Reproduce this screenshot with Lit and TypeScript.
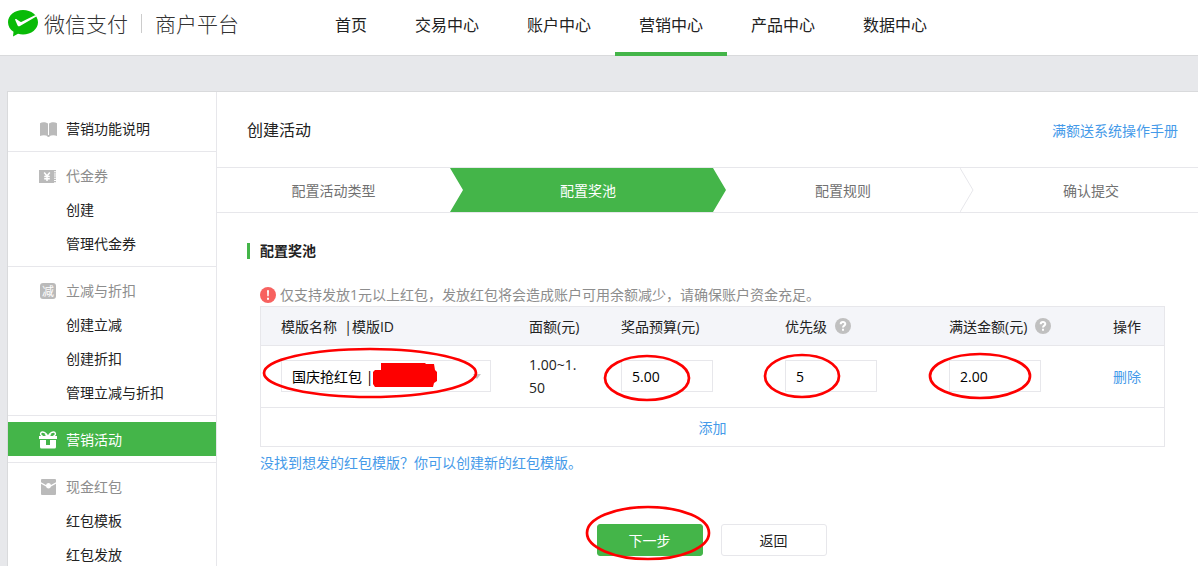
import { LitElement, html, css, svg, nothing, TemplateResult } from "lit";
import { customElement, property, state } from "lit/decorators.js";
import { classMap } from "lit/directives/class-map.js";

interface MenuGroup {
  icon: string;
  title: string;
  plain?: boolean;
  active?: boolean;
  items: string[];
}

const NAV = ["首页", "交易中心", "账户中心", "营销中心", "产品中心", "数据中心"];

const MENU: MenuGroup[] = [
  { icon: "book", title: "营销功能说明", plain: true, items: [] },
  { icon: "coupon", title: "代金券", items: ["创建", "管理代金券"] },
  { icon: "discount", title: "立减与折扣", items: ["创建立减", "创建折扣", "管理立减与折扣"] },
  { icon: "gift", title: "营销活动", active: true, items: [] },
  { icon: "packet", title: "现金红包", items: ["红包模板", "红包发放"] },
];

const STEPS = ["配置活动类型", "配置奖池", "配置规则", "确认提交"];

const ICONS: Record<string, TemplateResult> = {
  book: svg`<path fill="#bababa" d="M1 3.200C3 1.800 6.500 1.800 9 3.500v12.700c-2.500-1.200-5.500-1.200-8-.2zM10 3.500c2.500-1.700 6-1.700 8-.3V16c-2-1-5.500-1-8 .2z"/><path fill="#bababa" d="M8.500 15h2v2h-2z"/>`,
  coupon: svg`<path fill="#bababa" d="M0 3h15v13H0z"/><path stroke="#bababa" stroke-width="2" stroke-dasharray="1.200 1" d="M16 3v13"/><path fill="none" stroke="#fff" stroke-width="1.500" d="M5.200 5.500 8 9l2.800-3.500M8 8.800V14M5.200 9.500h5.600M5.200 11.800h5.600"/>`,
  gift: svg`<g fill="none" stroke="#fff" stroke-width="1.400"><path d="M8.800 5.200C7.500 2 4 .2 2.200 1.400.8 2.800 2 5 4 5.500M9.200 5.200C10.500 2 14 .2 15.800 1.400c1.400 1.400.2 3.600-1.800 4.100M8.500 5 6 3.500M9.500 5 12 3.500"/></g><path fill="#fff" d="M0 5h18v3H0zM1 9h6v5h4V9h6v7a1.500 1.500 0 0 1-1.500 1.500h-13A1.500 1.500 0 0 1 1 16z"/>`,
  packet: svg`<path fill="#bababa" d="M3 1h13a1 1 0 0 1 1 1v2.200L12 7a2.600 2.600 0 0 0-5 0L2 4.200V2a1 1 0 0 1 1-1zM2 5.800l5 2.700a2.600 2.600 0 0 0 5 0l5-2.700V16a1 1 0 0 1-1 1H3a1 1 0 0 1-1-1z"/>`,
};

@customElement("side-icon")
export class SideIcon extends LitElement {
  @property() name = "";

  static styles = css`
    :host { display: block; width: 18px; height: 18px; }
    svg { display: block; }
    .char {
      width: 16px; height: 16px; margin: 1px; border-radius: 3px;
      background: #bababa; color: #fff; text-align: center;
      font: 12px/16px "Noto Sans CJK SC", sans-serif;
    }
  `;

  render() {
    if (this.name === "discount") return html`<div class="char">减</div>`;
    return html`<svg width="18" height="18" viewBox="0 0 18 18" aria-hidden="true">${ICONS[this.name]}</svg>`;
  }
}

@customElement("help-tip")
export class HelpTip extends LitElement {
  static styles = css`
    :host { display: inline-block; width: 16px; height: 16px; margin-left: 8px; vertical-align: -2px; }
    svg { display: block; }
  `;

  render() {
    return html`<svg width="16" height="16" viewBox="0 0 16 16" aria-hidden="true">
      <circle cx="8" cy="8" r="8" fill="#c0c0c0" />
      <path d="M5.700 6.200C5.700 3.300 10.300 3.300 10.300 6c0 1.700-2.300 1.600-2.300 3.500" fill="none" stroke="#fff" stroke-width="2" />
      <path d="M7 10.700h2v2H7z" fill="#fff" />
    </svg>`;
  }
}

/* A hand-drawn style red ring laid over a control. */
@customElement("red-ring")
export class RedRing extends LitElement {
  @property({ type: Number }) rx = 40;
  @property({ type: Number }) ry = 20;

  static styles = css`
    :host { position: absolute; pointer-events: none; z-index: 2; }
    svg { display: block; }
  `;

  render() {
    const w = this.rx * 2 + 4;
    const h = this.ry * 2 + 4;
    return html`<svg width=${w} height=${h} aria-hidden="true">
      <ellipse cx=${w / 2} cy=${h / 2} rx=${this.rx} ry=${this.ry} fill="none" stroke="#fe0000" stroke-width="2.700" />
    </svg>`;
  }
}

@customElement("app-root")
export class AppRoot extends LitElement {
  @state() private step = 1;

  static styles = css`
    :host {
      display: block;
      min-height: 100vh;
      background: #e7e8eb;
      color: #222;
      font: 14px/22px "Open Sans", "Noto Sans CJK SC", sans-serif;
    }
    * { box-sizing: border-box; }
    a { color: inherit; text-decoration: none; }
    h1, h2, p, ul, ol { margin: 0; padding: 0; font-weight: 400; list-style: none; }

    .header { display: flex; height: 56px; background: #fff; border-bottom: 1px solid #d9dadc; }
    .brand {
      display: flex; align-items: center; width: 311px; height: 47px; padding-left: 8px;
      font-size: 21px; font-weight: 300; color: #333; white-space: nowrap; flex: none;
    }
    .brand-name { margin-left: 6px; }
    .brand-site { margin-left: 13px; }
    .rule { width: 1px; height: 19px; margin-left: 13px; background: #ccc; }
    .nav { display: flex; font-size: 16px; }
    .nav-link { height: 56px; padding: 0 24px; line-height: 51px; white-space: nowrap; }
    .nav-link.active { border-bottom: 4px solid #44b549; }

    .panel {
      display: flex; margin: 35px 0 0 7px; background: #fff;
      border: 1px solid #d9dadc; border-right: 0;
    }
    .side { width: 209px; flex: none; padding-top: 13px; border-right: 1px solid #e7e7eb; }
    .group { padding: 6px 0; border-bottom: 1px solid #e7e7eb; }
    .group:last-child { border-bottom: 0; }
    .group-title { display: flex; align-items: center; gap: 9px; height: 34px; padding: 2px 0 0 31px; color: #8d8d8d; }
    .group-title.plain { color: #222; }
    .group-title.active { background: #44b549; color: #fff; }
    .item { display: block; height: 34px; padding-left: 58px; line-height: 36px; }

    .main { flex: 1; min-width: 0; }
    .title-row { display: flex; align-items: center; justify-content: space-between; height: 75px; padding: 0 20px 0 30px; }
    .title { font-size: 16px; }
    .link { color: #459ae9; }
    .title-row .link { padding-top: 2px; }

    .steps {
      display: grid; grid-template-columns: 233fr 263fr 247fr 238fr;
      border: solid #e7e7eb; border-width: 1px 0; text-align: center; color: #717171;
    }
    .step { position: relative; height: 44px; padding-left: 13px; line-height: 46px; }
    .step:first-child { padding-left: 0; }
    .step:last-child { padding-left: 24px; }
    .step.active { color: #fff; }
    .step.active::before {
      content: ""; position: absolute; z-index: 0; inset: 0 -13px 0 0; background: #44b549;
      clip-path: polygon(0 0, calc(100% - 13px) 0, 100% 50%, calc(100% - 13px) 100%, 0 100%, 13px 50%);
    }
    .step-text { position: relative; }
    .chevron { position: absolute; top: 0; right: -14px; }

    .content { padding: 30px 33px 30px 30px; }
    .section { padding-left: 10px; border-left: 3px solid #44b549; font-size: 14px; line-height: 16px; font-weight: 700; }
    .body { padding-left: 13px; }
    .alert { display: flex; align-items: center; gap: 4px; margin-top: 25px; color: #8d8d8d; }

    .prizes { width: 100%; border-collapse: separate; border-spacing: 0; table-layout: fixed; border: 1px solid #e7e7eb; }
    .prizes th { height: 39px; padding: 2px 0 0 20px; background: #f4f5f9; border-bottom: 1px solid #e7e7eb; font-weight: 400; text-align: left; white-space: nowrap; }
    .prizes td { height: 62px; padding: 0 20px 2px; border-bottom: 1px solid #e7e7eb; }
    .prizes .amount { line-height: 23px; word-break: break-all; }
    .prizes .op { padding: 0 0 0 20px; }
    .prizes .add { height: 38px; padding: 2px 0 0; border-bottom: 0; text-align: center; }
    .c-amount { width: 92px; }
    .c-input { width: 164px; }
    .c-op { width: 71px; }

    .field { position: relative; height: 32px; }
    .box {
      display: block; width: 92px; height: 32px; padding: 2px 10px 0; margin: 0; background: #fff;
      border: 1px solid #e7e7eb; border-radius: 0; color: #000; font: inherit; outline: none;
    }
    .select { width: 210px; appearance: none; }
    .caret { position: absolute; left: 192px; top: 14px; border: solid transparent; border-width: 5px 4px 0; border-top-color: #c4c4c4; }
    .redact { position: absolute; left: 92px; top: 2px; z-index: 1; }
    .r-name { left: -19px; top: -13px; }
    .r-budget { left: -18px; top: -6px; }
    .r-priority { left: -22px; top: -7px; }
    .r-total { left: -21px; top: -8px; }
    .r-next { left: -12px; top: -19px; }

    .hint { margin-top: 5px; }
    .actions { display: flex; justify-content: center; gap: 18px; margin-top: 50px; padding-right: 2px; }
    .action { position: relative; }
    .btn { display: block; width: 106px; height: 32px; padding: 2px 0 0; border: 1px solid #e7e7eb; border-radius: 3px; background: #fff; color: #222; font: inherit; }
    .btn.primary { background: #44b549; border-color: #44b549; color: #fff; }
  `;

  private renderGroup(g: MenuGroup) {
    return html`<li class="group">
      <a href="#" class=${classMap({ "group-title": true, plain: !!g.plain, active: !!g.active })}>
        <side-icon name=${g.icon}></side-icon><span>${g.title}</span>
      </a>
      ${g.items.map((t) => html`<a class="item" href="#">${t}</a>`)}
    </li>`;
  }

  private renderStep(text: string, i: number) {
    return html`<li class=${classMap({ step: true, active: i === this.step })}>
      <span class="step-text">${text}</span>
      ${i > this.step && i < STEPS.length - 1
        ? html`<svg class="chevron" width="14" height="44" aria-hidden="true"><path d="M0 0 13 22 0 44" fill="none" stroke="#e7e7eb" /></svg>`
        : nothing}
    </li>`;
  }

  render() {
    return html`
      <header class="header">
        <div class="brand">
          <svg width="30" height="27" viewBox="0 0 30 27" aria-hidden="true">
            <path fill="#09bb07" d="M15 0C6.700 0 0 5.400 0 12.300c0 3.900 2.100 7.300 5.500 9.500L5 26.500l5-2.800c1.600.4 3.200.7 5 .7 8.300 0 15-5.400 15-12.200C30 5.400 23.300 0 15 0z" />
            <path fill="#fff" d="M7 9.500c.6-.6 1.300-.4 1.900 0l3 2.100c.6.400 1.200.4 1.800.1L27.500 5l.8 1.400L12 16c-1 .6-1.800.4-2.400-.6z" />
          </svg>
          <span class="brand-name">微信支付</span>
          <span class="rule"></span>
          <span class="brand-site">商户平台</span>
        </div>
        <nav class="nav">
          ${NAV.map((t) => html`<a href="#" class=${classMap({ "nav-link": true, active: t === "营销中心" })}>${t}</a>`)}
        </nav>
      </header>

      <div class="panel">
        <ul class="side">${MENU.map((g) => this.renderGroup(g))}</ul>
        <main class="main">
          <div class="title-row">
            <h1 class="title">创建活动</h1>
            <a class="link" href="#">满额送系统操作手册</a>
          </div>
          <ol class="steps">${STEPS.map((t, i) => this.renderStep(t, i))}</ol>
          <div class="content">
            <h2 class="section">配置奖池</h2>
            <div class="body">
              <p class="alert">
                <svg width="16" height="16" viewBox="0 0 16 16" aria-hidden="true">
                  <circle cx="8" cy="8" r="8" fill="#f76260" />
                  <path d="M7 3.200h2l-.3 6H7.300zM7 10.700h2v2H7z" fill="#fff" />
                </svg>
                <span>仅支持发放1元以上红包，发放红包将会造成账户可用余额减少，请确保账户资金充足。</span>
              </p>
              <table class="prizes">
                <colgroup>
                  <col /><col class="c-amount" /><col class="c-input" /><col class="c-input" /><col class="c-input" /><col class="c-op" />
                </colgroup>
                <thead>
                  <tr>
                    <th>模版名称&nbsp; |模版ID</th>
                    <th>面额(元)</th>
                    <th>奖品预算(元)</th>
                    <th>优先级<help-tip></help-tip></th>
                    <th>满送金额(元)<help-tip></help-tip></th>
                    <th>操作</th>
                  </tr>
                </thead>
                <tbody>
                  <tr>
                    <td>
                      <div class="field">
                        <select class="box select" aria-label="模版名称"><option>国庆抢红包 |</option></select>
                        <span class="caret"></span>
                        <svg class="redact" width="65" height="25" aria-hidden="true">
                          <path fill="#fe0000" d="M8 1h44l1 1h8l1 6 2 2v9l-3 2-1 4H2l-2-3V10l2-2h6z" />
                        </svg>
                        <red-ring class="r-name" rx="106" ry="24"></red-ring>
                      </div>
                    </td>
                    <td class="amount">1.00~1.50</td>
                    <td>
                      <div class="field">
                        <input class="box" aria-label="奖品预算(元)" value="5.00" />
                        <red-ring class="r-budget" rx="42" ry="22"></red-ring>
                      </div>
                    </td>
                    <td>
                      <div class="field">
                        <input class="box" aria-label="优先级" value="5" />
                        <red-ring class="r-priority" rx="37" ry="21"></red-ring>
                      </div>
                    </td>
                    <td>
                      <div class="field">
                        <input class="box" aria-label="满送金额(元)" value="2.00" />
                        <red-ring class="r-total" rx="50" ry="22"></red-ring>
                      </div>
                    </td>
                    <td class="op"><a class="link" href="#">删除</a></td>
                  </tr>
                  <tr>
                    <td class="add" colspan="6"><a class="link" href="#">添加</a></td>
                  </tr>
                </tbody>
              </table>
              <p class="hint"><a class="link" href="#">没找到想发的红包模版？你可以创建新的红包模版。</a></p>
              <div class="actions">
                <div class="action">
                  <button class="btn primary" type="button">下一步</button>
                  <red-ring class="r-next" rx="61" ry="26"></red-ring>
                </div>
                <button class="btn" type="button">返回</button>
              </div>
            </div>
          </div>
        </main>
      </div>
    `;
  }
}
